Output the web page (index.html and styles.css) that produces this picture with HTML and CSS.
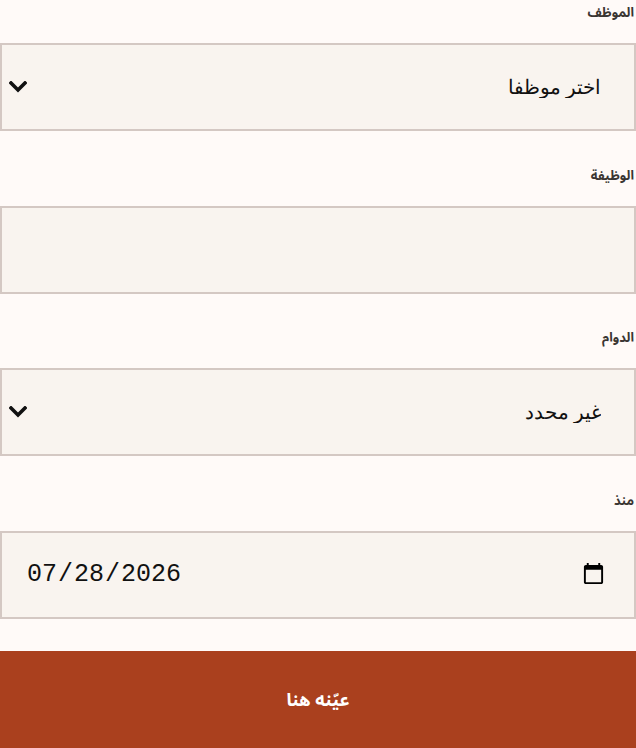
FILE: index.html
```html
<!DOCTYPE html>
<html lang="ar" dir="rtl">
<head>
<meta charset="utf-8">
<link rel="stylesheet" href="styles.css">
</head>
<body>
<form class="form">
  <div class="field">
    <label class="label" for="emp">الموظف</label>
    <select id="emp" class="control select">
      <option>اختر موظفا</option>
    </select>
  </div>
  <div class="field">
    <label class="label" for="job">الوظيفة</label>
    <input id="job" class="control" type="text">
  </div>
  <div class="field">
    <label class="label" for="shift">الدوام</label>
    <select id="shift" class="control select">
      <option>غير محدد</option>
    </select>
  </div>
  <div class="field">
    <label class="label" for="since">منذ</label>
    <input id="since" class="control date" type="date" value="2026-07-28" dir="ltr">
  </div>
  <button class="submit" type="button">عيّنه هنا</button>
</form>
</body>
</html>
```
FILE: styles.css
```css
html, body {
  margin: 0;
  padding: 0;
  background: #fffaf8;
}
body {
  font-family: "Noto Sans Arabic", "DejaVu Sans", sans-serif;
  color: #222;
}
.form {
  display: flex;
  flex-direction: column;
  padding: 0 2px 0 0;
}
.field {
  display: flex;
  flex-direction: column;
  margin-bottom: 31.67px;
}
.label {
  font-family: "Noto Sans Arabic", "DejaVu Sans", sans-serif;
  font-size: 13px;
  font-weight: bold;
  line-height: 24px;
  height: 24px;
  margin-bottom: 19px;
  padding-top: 1px;
  box-sizing: border-box;
  color: #3a3532;
}
.control {
  box-sizing: border-box;
  height: 88px;
  width: 636px;
  margin-right: -2px;
  border: 2px solid #d4c8c3;
  background: #f9f4ef;
  border-radius: 0;
  font-family: "Liberation Serif", cursive;
  font-size: 20px;
  padding: 0 33px 0 28px;
  color: #111;
  outline: none;
}
.select {
  appearance: none;
  -webkit-appearance: none;
  background-image: url("data:image/svg+xml;utf8,<svg xmlns='http://www.w3.org/2000/svg' width='18' height='12' viewBox='0 0 18 12'><path d='M2 2 L9 9 L16 2' fill='none' stroke='%23111' stroke-width='3.6' stroke-linecap='square'/></svg>");
  background-repeat: no-repeat;
  background-position: left 7px center;
  background-size: 18px 12px;
}
.date {
  font-family: "Liberation Mono", monospace;
  font-size: 25px;
  padding: 0 26px 0 24px;
  text-align: left;
}
.submit {
  height: 98px;
  width: 636px;
  border: 0;
  background: #aa401e;
  color: #fff;
  font-family: "Noto Sans Arabic", "DejaVu Sans", sans-serif;
  font-weight: bold;
  font-size: 18px;
  margin-right: -2px;
}
```
